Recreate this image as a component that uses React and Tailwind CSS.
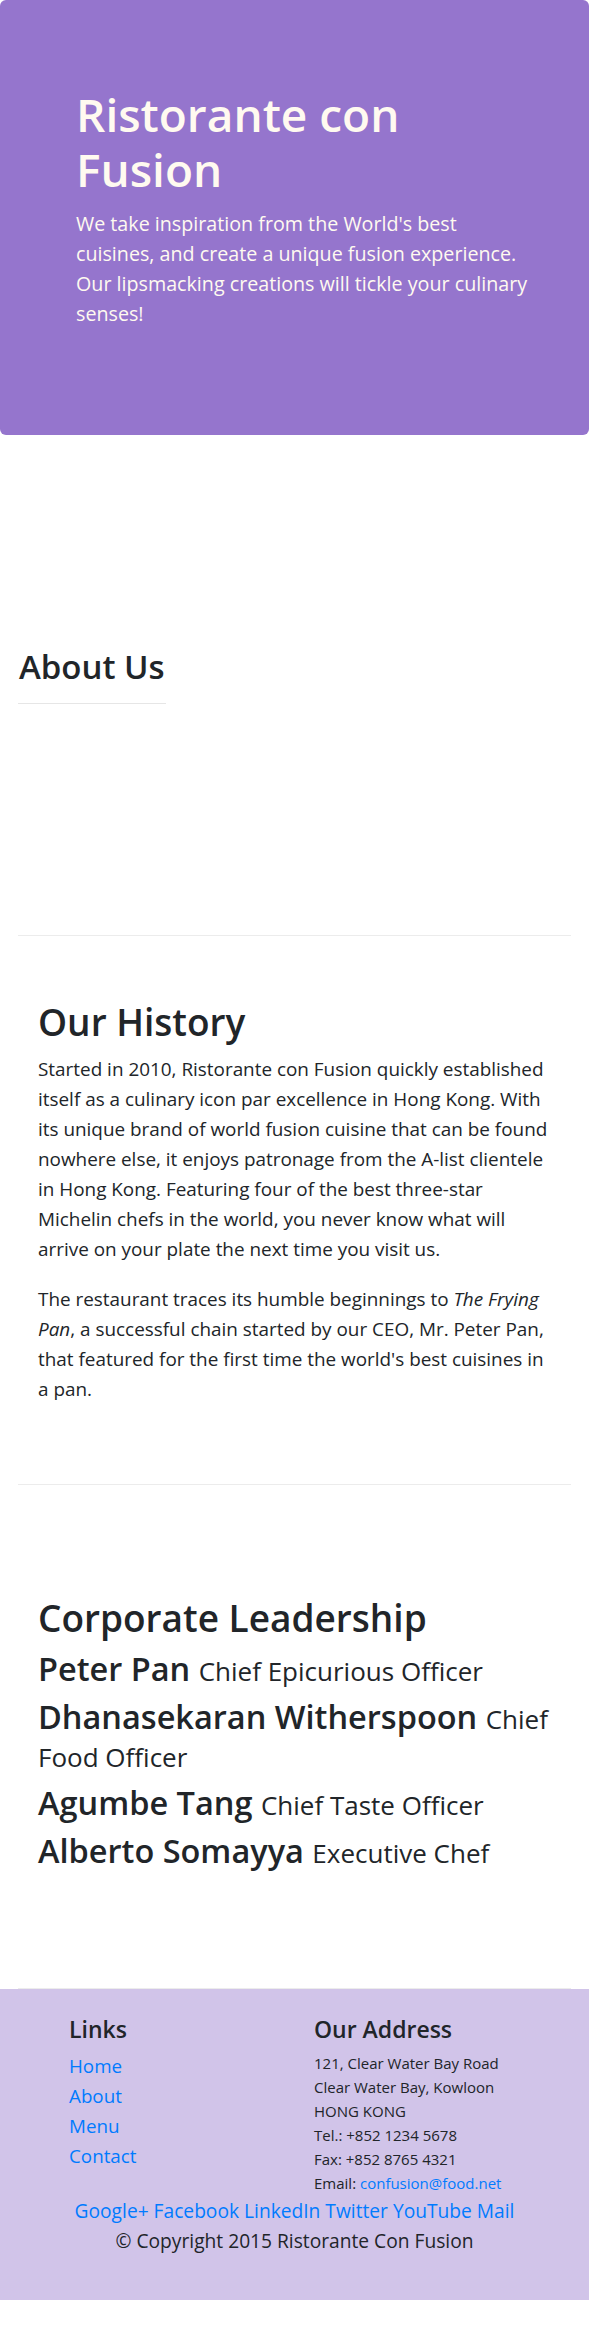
import React from 'react';

const leaders = [
  { name: 'Peter Pan', title: 'Chief Epicurious Officer' },
  { name: 'Dhanasekaran Witherspoon', title: 'Chief Food Officer' },
  { name: 'Agumbe Tang', title: 'Chief Taste Officer' },
  { name: 'Alberto Somayya', title: 'Executive Chef' },
];

const socials = ['Google+', 'Facebook', 'LinkedIn', 'Twitter', 'YouTube', 'Mail'];

const App = () => {
  return (
    <div className="font-['Open_Sans',sans-serif] text-[#212529] bg-white">
      {/* jumbotron */}
      <header className="bg-[#9575cd] rounded-[6px] h-[435px] pt-[87px] pl-[76px] pr-[56px] text-[#fffaf0]">
        <h1 className="text-[46px] leading-[55px] font-semibold mb-[12px] pr-[14px]">Ristorante con Fusion</h1>
        <p className="text-[19.7px] leading-[30px]">
          We take inspiration from the World's best cuisines, and create a unique fusion experience. Our lipsmacking creations will tickle your culinary senses!
        </p>
      </header>

      <div className="px-[18px]">
        {/* about */}
        <div className="pt-[213px]">
          <h3 className="text-[33px] leading-[38.5px] font-semibold pl-[1px]">About Us</h3>
          <div className="w-[148px] border-t border-[#e6e6e6] mt-[16px]"></div>
        </div>
        <hr className="mt-[231px] border-[#ececec]" />

        {/* history */}
        <section className="pl-[20px] pr-[16px] pt-[64px]">
          <h2 className="text-[37px] leading-[44px] font-semibold mb-[10px]">Our History</h2>
          <p className="text-[18.9px] leading-[30px] mb-[20px]">
            Started in 2010, Ristorante con Fusion quickly established itself as a culinary icon par excellence in Hong Kong. With its unique brand of world fusion cuisine that can be found nowhere else, it enjoys patronage from the A-list clientele in Hong Kong. Featuring four of the best three-star Michelin chefs in the world, you never know what will arrive on your plate the next time you visit us.
          </p>
          <p className="text-[18.9px] leading-[30px] mb-[20px]">
            The restaurant traces its humble beginnings to <em>The Frying Pan</em>, a successful chain started by our CEO, Mr. Peter Pan, that featured for the first time the world's best cuisines in a pan.
          </p>
        </section>
        <hr className="mt-[80px] border-[#ececec]" />

        {/* leadership */}
        <section className="pl-[20px] pr-[14px] pt-[111px]">
          <h2 className="text-[37px] leading-[44px] font-semibold mb-[10px]">Corporate Leadership</h2>
          {leaders.map((l) => (
            <h3 key={l.name} className="text-[32.5px] leading-[1.17] font-semibold mb-[10px]">
              {l.name} <small className="text-[80%] font-normal">{l.title}</small>
            </h3>
          ))}
        </section>
        <hr className="mt-[118px] border-[#ececec]" />
      </div>

      {/* footer */}
      <footer className="bg-[#d1c4e9] h-[311px] pt-[27px]">
        <div className="flex pl-[69px]">
          <div className="w-[245px]">
            <h5 className="text-[23px] leading-[27.5px] font-semibold mb-[8px]">Links</h5>
            <ul className="text-[18.8px] leading-[30px] text-[#007bff]">
              <li>Home</li>
              <li>About</li>
              <li>Menu</li>
              <li>Contact</li>
            </ul>
          </div>
          <div>
            <h5 className="text-[23px] leading-[27.5px] font-semibold mb-[8px]">Our Address</h5>
            <address className="not-italic text-[15px] leading-[24px]">
              121, Clear Water Bay Road<br />
              Clear Water Bay, Kowloon<br />
              HONG KONG<br />
              Tel.: +852 1234 5678<br />
              Fax: +852 8765 4321<br />
              Email: <span className="text-[#007bff]">confusion@food.net</span>
            </address>
          </div>
        </div>
        <div className="text-center text-[19.2px] leading-[30px] mt-[1px]">
          <div className="text-[#007bff]">{socials.join(' ')}</div>
          <p>© Copyright 2015 Ristorante Con Fusion</p>
        </div>
      </footer>
    </div>
  );
};

export default App;
